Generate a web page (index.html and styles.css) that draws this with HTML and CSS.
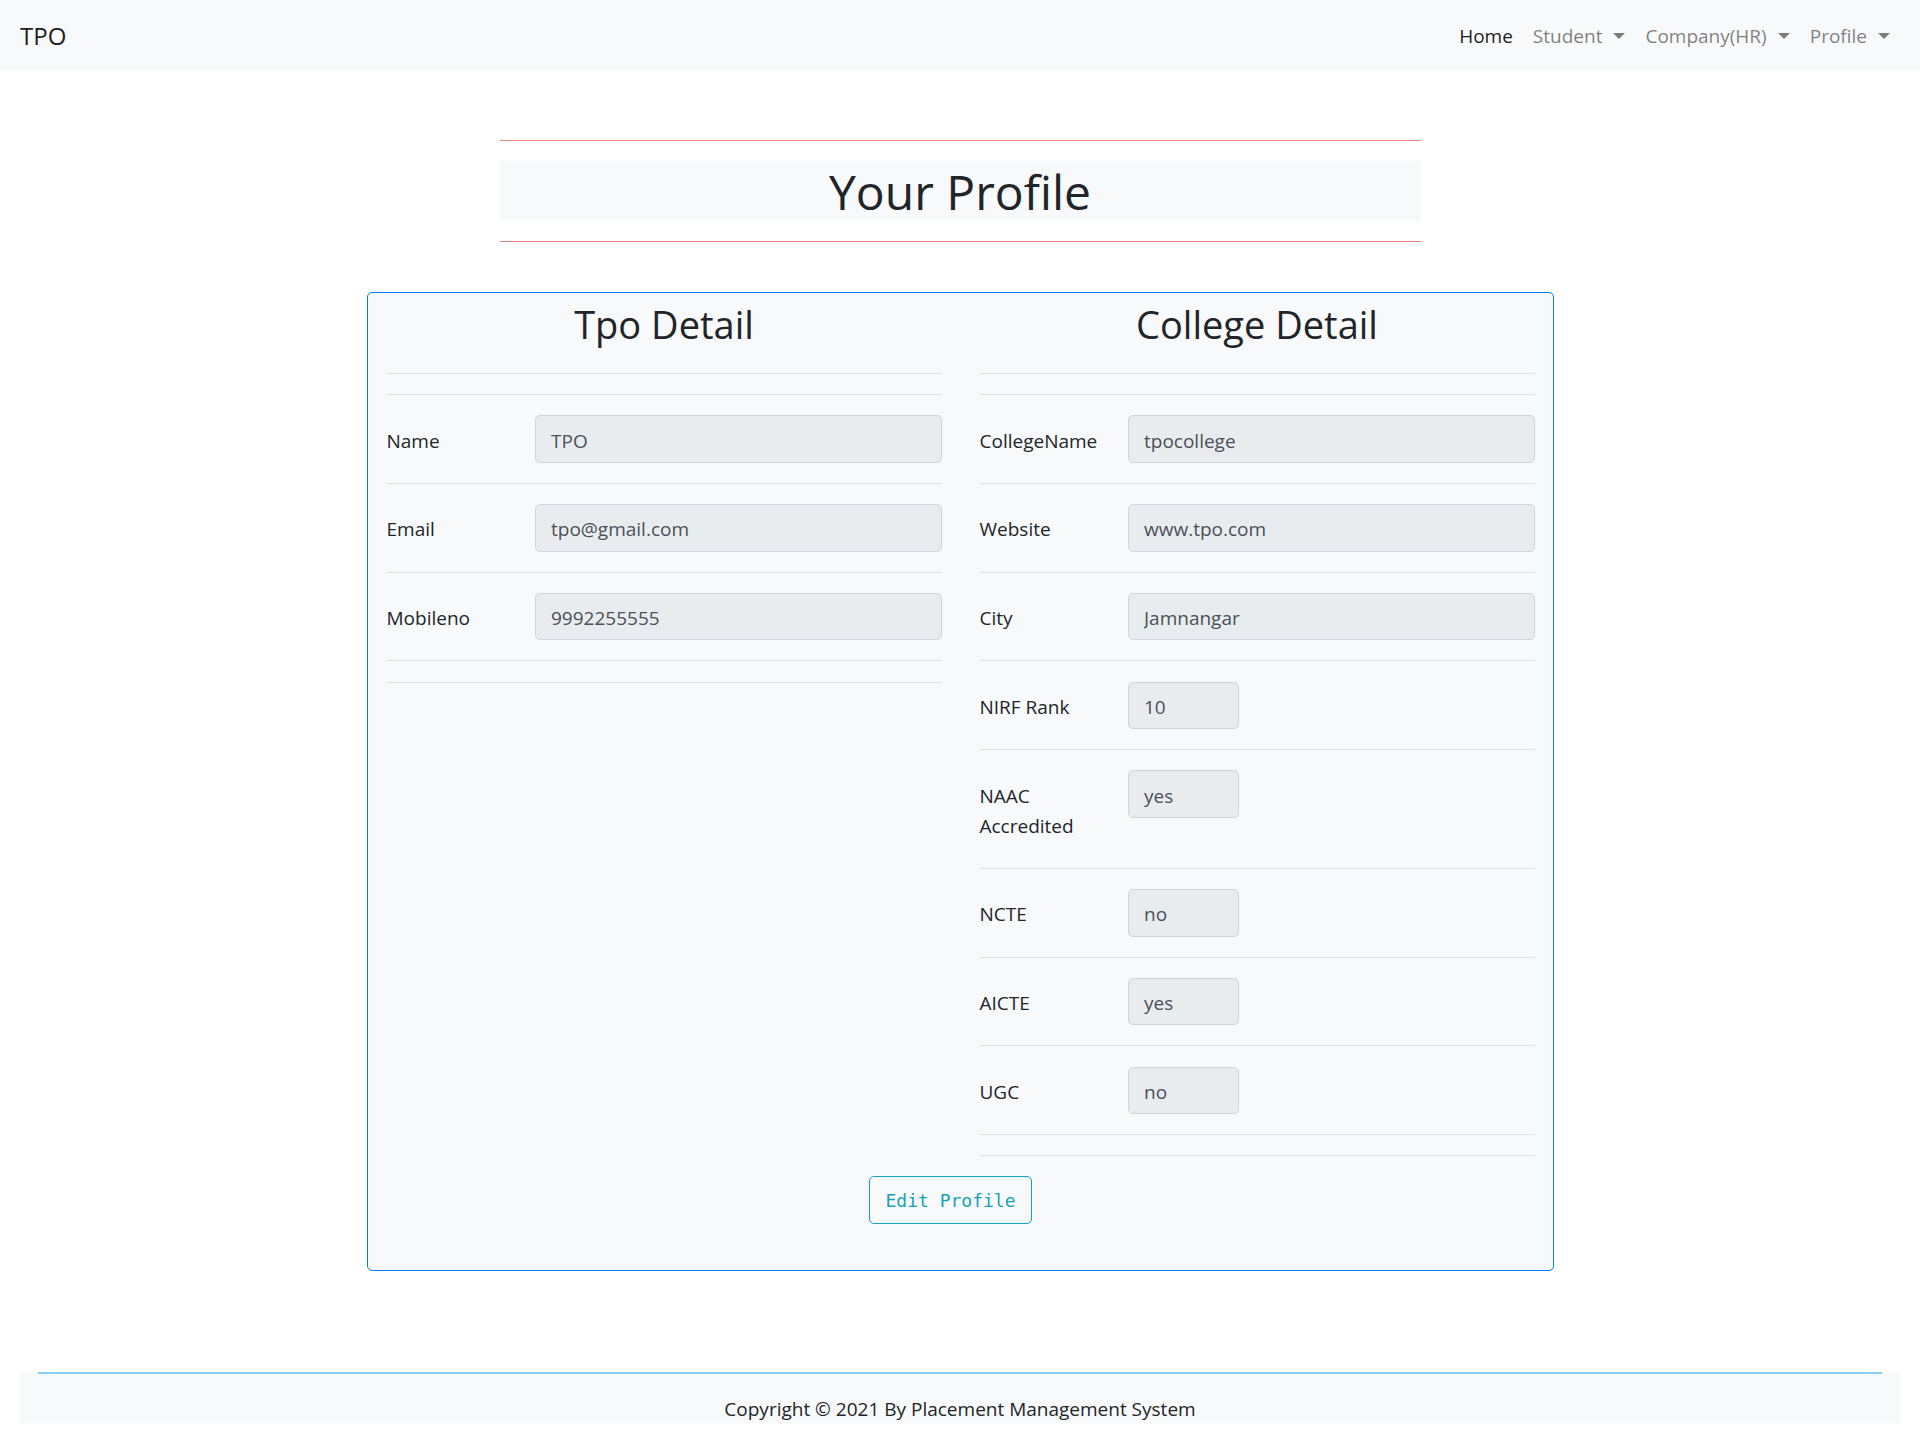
FILE: index.html
```html
<!DOCTYPE html>
<html lang="en">
<head>
<meta charset="utf-8">
<title>TPO - Your Profile</title>
<link rel="stylesheet" href="styles.css">
</head>
<body>
<nav class="navbar">
  <a class="brand" href="#">TPO</a>
  <ul class="nav">
    <li><a class="nav-link active" href="#">Home</a></li>
    <li><a class="nav-link dropdown" href="#">Student</a></li>
    <li><a class="nav-link dropdown" href="#">Company(HR)</a></li>
    <li><a class="nav-link dropdown" href="#">Profile</a></li>
  </ul>
</nav>

<section class="title-wrap">
  <hr class="red-rule">
  <h1 class="page-title">Your Profile</h1>
  <hr class="red-rule">
</section>

<main class="card">
  <div class="columns">
    <div class="col">
      <h2 class="col-title">Tpo Detail</h2>
      <hr class="rule">
      <hr class="rule">
      <div class="field"><label class="field-label">Name</label><div class="field-value"><input class="input" value="TPO" readonly></div></div>
      <hr class="rule">
      <div class="field"><label class="field-label">Email</label><div class="field-value"><input class="input" value="tpo@gmail.com" readonly></div></div>
      <hr class="rule">
      <div class="field"><label class="field-label">Mobileno</label><div class="field-value"><input class="input" value="9992255555" readonly></div></div>
      <hr class="rule">
      <hr class="rule">
    </div>
    <div class="col">
      <h2 class="col-title">College Detail</h2>
      <hr class="rule">
      <hr class="rule">
      <div class="field"><label class="field-label">CollegeName</label><div class="field-value"><input class="input" value="tpocollege" readonly></div></div>
      <hr class="rule">
      <div class="field"><label class="field-label">Website</label><div class="field-value"><input class="input" value="www.tpo.com" readonly></div></div>
      <hr class="rule">
      <div class="field"><label class="field-label">City</label><div class="field-value"><input class="input" value="Jamnangar" readonly></div></div>
      <hr class="rule">
      <div class="field"><label class="field-label">NIRF Rank</label><div class="field-value"><input class="input small" value="10" readonly></div></div>
      <hr class="rule">
      <div class="field"><label class="field-label">NAAC Accredited</label><div class="field-value"><input class="input small" value="yes" readonly></div></div>
      <hr class="rule">
      <div class="field"><label class="field-label">NCTE</label><div class="field-value"><input class="input small" value="no" readonly></div></div>
      <hr class="rule">
      <div class="field"><label class="field-label">AICTE</label><div class="field-value"><input class="input small" value="yes" readonly></div></div>
      <hr class="rule">
      <div class="field"><label class="field-label">UGC</label><div class="field-value"><input class="input small" value="no" readonly></div></div>
      <hr class="rule">
      <hr class="rule">
    </div>
  </div>
  <div class="actions">
    <button class="btn-edit" type="button">Edit Profile</button>
  </div>
</main>

<footer class="footer">
  <p>Copyright © 2021 By Placement Management System</p>
</footer>
</body>
</html>
```

FILE: styles.css
```css
* { box-sizing: border-box; }

html, body { margin: 0; padding: 0; }

body {
  font-family: "Open Sans", "Noto Sans", "Liberation Sans", sans-serif;
  font-size: 20px;
  line-height: 1.5;
  color: #212529;
  background: #fff;
}

/* Navbar */
.navbar {
  height: 70px;
  background: #f8f9fa;
  display: flex;
  align-items: center;
  justify-content: space-between;
  padding: 2px 20px 0;
}
.brand {
  font-size: 24px;
  color: rgba(0,0,0,.9);
  text-decoration: none;
  line-height: 1.5;
}
.nav {
  list-style: none;
  margin: 0;
  padding: 0;
  display: flex;
}
.nav-link {
  display: block;
  padding: 10px 10px;
  color: rgba(0,0,0,.5);
  text-decoration: none;
  font-size: 19px;
}
.nav-link.active { color: rgba(0,0,0,.9); }
.nav-link.dropdown::after {
  content: "";
  display: inline-block;
  margin-left: 11px;
  vertical-align: 4px;
  border-top: 6px solid;
  border-right: 6px solid transparent;
  border-left: 6px solid transparent;
}

/* Title */
.title-wrap {
  width: 921px;
  margin: 70px auto 0;
}
.red-rule {
  border: 0;
  border-top: 1px solid #f08080;
  margin: 0;
}
.page-title {
  margin: 20px 0;
  height: 60px;
  line-height: 62px;
  font-size: 48px;
  font-weight: 400;
  text-align: center;
  background: #f8f9fa;
}

/* Card */
.card {
  width: 1187px;
  margin: 50px auto 0;
  background: #f8f9fa;
  border: 1px solid #007bff;
  border-radius: 5px;
  padding: 7px 18px 46px 19px;
}
.columns {
  display: grid;
  grid-template-columns: 555px 555px;
  column-gap: 38px;
  align-items: start;
}
.col-title {
  margin: 0;
  font-size: 38px;
  font-weight: 400;
  line-height: 48px;
  text-align: center;
  padding-bottom: 25px;
}
.rule {
  border: 0;
  border-top: 1px solid rgba(0,0,0,.1);
  margin: 20.125px 0;
}
.col-title + .rule { margin-top: 0; }

.field {
  display: flex;
  align-items: flex-start;
}
.field-label {
  width: 148.5px;
  flex: none;
  padding: 10.25px 37px 7.25px 0;
  line-height: 30px;
  font-size: 19px;
}
.field-value {
  flex: 1;
}
.input {
  display: block;
  width: 100%;
  height: 47.5px;
  padding: 9px 15px 6px;
  font: inherit;
  font-size: 19px;
  line-height: 30px;
  color: #495057;
  background: #e9ecef;
  border: 1px solid #ced4da;
  border-radius: 5px;
}
.input.small { width: 111px; }

.actions {
  display: flex;
  justify-content: center;
  padding-right: 20px;
}
.btn-edit {
  width: 163px;
  height: 48px;
  font-family: "DejaVu Sans Mono", "Liberation Mono", monospace;
  font-size: 18px;
  color: #17a2b8;
  background: transparent;
  border: 1px solid #17a2b8;
  border-radius: 5px;
  padding: 0;
  cursor: pointer;
}

/* Footer */
.footer {
  margin: 101px 20px 0;
  background: #f8f9fa;
  height: 51px;
  padding: 0 18px;
}
.footer::before {
  content: "";
  display: block;
  border-top: 2px solid #87cefa;
}
.footer p {
  margin: 0;
  padding-top: 20px;
  text-align: center;
  font-size: 19px;
  line-height: 30px;
}
```
